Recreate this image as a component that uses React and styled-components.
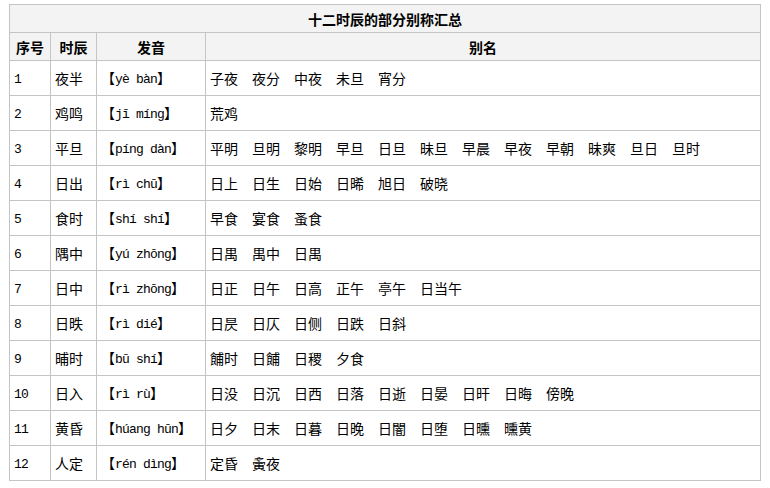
import styled, { createGlobalStyle } from 'styled-components';

const GlobalStyle = createGlobalStyle`
  body {
    margin: 0;
    background: #fff;
    font-family: "Noto Sans CJK SC", sans-serif;
  }
`;

const Page = styled.div`
  padding: 4px 9px;
`;

const Table = styled.table`
  width: 752px;
  border-collapse: collapse;
  table-layout: fixed;
  font-size: 14px;
  color: #000;
`;

const Caption = styled.th`
  height: 27px;
  padding: 0;
  background: #f3f3f3;
  border: 1px solid #c4c4c4;
  font-weight: bold;
  text-align: center;
`;

const Head = styled.th`
  height: 27px;
  padding: 0 2px;
  background: #f3f3f3;
  border: 1px solid #c4c4c4;
  font-weight: bold;
  text-align: center;
`;

const Cell = styled.td`
  height: 34px;
  padding: 0 4px;
  border: 1px solid #c4c4c4;
  white-space: nowrap;
  overflow: hidden;
  line-height: 16px;
`;

const Latin = styled.span`
  font-family: "Liberation Mono", monospace;
  font-size: 13px;
  letter-spacing: -0.8px;
`;

const Alias = styled.span`
  display: inline-block;
  width: 28px;
  margin-right: 14px;
  white-space: nowrap;
  &:last-child { margin-right: 0; }
`;

const rows = [
  ['1', '夜半', 'yè bàn', '子夜 夜分 中夜 未旦 宵分'],
  ['2', '鸡鸣', 'jī míng', '荒鸡'],
  ['3', '平旦', 'píng dàn', '平明 旦明 黎明 早旦 日旦 昧旦 早晨 早夜 早朝 昧爽 旦日 旦时'],
  ['4', '日出', 'rì chū', '日上 日生 日始 日晞 旭日 破晓'],
  ['5', '食时', 'shí shí', '早食 宴食 蚤食'],
  ['6', '隅中', 'yú zhōng', '日禺 禺中 日禺'],
  ['7', '日中', 'rì zhōng', '日正 日午 日高 正午 亭午 日当午'],
  ['8', '日昳', 'rì dié', '日昃 日仄 日侧 日跌 日斜'],
  ['9', '晡时', 'bū shí', '餔时 日餔 日稷 夕食'],
  ['10', '日入', 'rì rù', '日没 日沉 日西 日落 日逝 日晏 日旰 日晦 傍晚'],
  ['11', '黄昏', 'húang hūn', '日夕 日末 日暮 日晚 日闇 日堕 日曛 曛黄'],
  ['12', '人定', 'rén dìng', '定昏 夤夜'],
];

export default function App() {
  return (
    <Page>
      <GlobalStyle />
      <Table>
        <colgroup>
          <col style={{ width: 41 }} />
          <col style={{ width: 46 }} />
          <col style={{ width: 109 }} />
          <col />
        </colgroup>
        <thead>
          <tr>
            <Caption colSpan={4}>十二时辰的部分别称汇总</Caption>
          </tr>
          <tr>
            <Head>序号</Head>
            <Head>时辰</Head>
            <Head>发音</Head>
            <Head>别名</Head>
          </tr>
        </thead>
        <tbody>
          {rows.map(([no, name, pinyin, aliases]) => (
            <tr key={no}>
              <Cell><Latin>{no}</Latin></Cell>
              <Cell>{name}</Cell>
              <Cell>
                【<Latin>{pinyin}</Latin>】
              </Cell>
              <Cell>
                {aliases.split(' ').map((a, i) => (
                  <Alias key={i}>{a}</Alias>
                ))}
              </Cell>
            </tr>
          ))}
        </tbody>
      </Table>
    </Page>
  );
}
